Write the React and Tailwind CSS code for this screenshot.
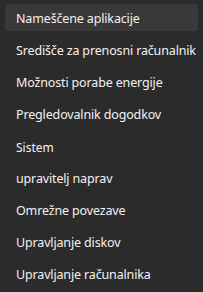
import React from "react";

const items = [
  { label: "Nameščene aplikacije", active: true },
  { label: "Središče za prenosni računalnik" },
  { label: "Možnosti porabe energije" },
  { label: "Pregledovalnik dogodkov" },
  { label: "Sistem", small: true },
  { label: "upravitelj naprav" },
  { label: "Omrežne povezave" },
  { label: "Upravljanje diskov" },
  { label: "Upravljanje računalnika" },
];

export default function App() {
  return (
    <div
      className="w-[203px] h-[292px] bg-[#2b2b2b] pt-[4px] overflow-hidden"
      style={{ fontFamily: '"Noto Sans", "Open Sans", sans-serif' }}
    >
      {items.map((it) => (
        <div
          key={it.label}
          className={`mx-[5px] h-[27px] mb-[5px] rounded-[4px] flex items-center pt-[4px] pl-[11px] text-[#f2f2f2] whitespace-nowrap ${
            it.active ? "bg-[#393939]" : ""
          } ${it.small ? "text-[12px]" : "text-[12.5px] tracking-[-0.15px]"}`}
        >
          {it.label}
        </div>
      ))}
    </div>
  );
}
